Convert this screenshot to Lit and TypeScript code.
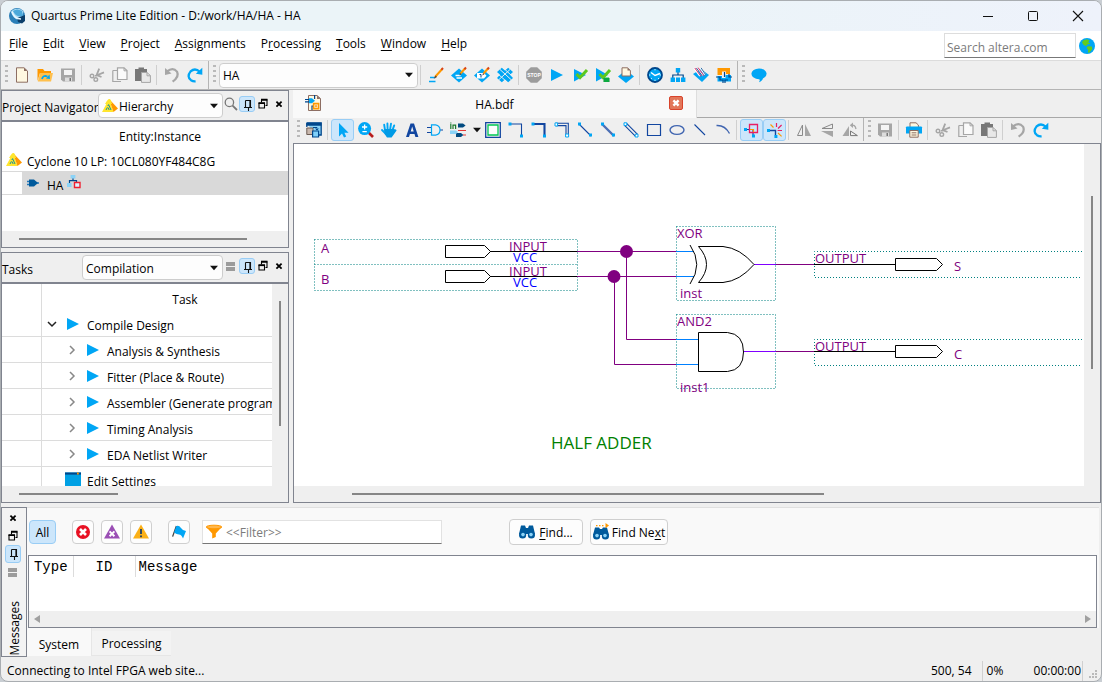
import { LitElement, html, css, svg, nothing } from "lit";
import type { TemplateResult } from "lit";
import { customElement } from "lit/decorators.js";
import { classMap } from "lit/directives/class-map.js";

const BLUE = "#00a6f5";
const NAVY = "#00468b";
const INK = "#1246a0";
const GREY = "#a6a6a6";
const ORANGE = "#ff9800";
const BROWN = "#8d6e63";

const diamond = svg`<path d="M8 1.5 16 8.5 8 15.5 0 8.5z" fill=${BLUE}/>`;
const pencil = svg`<path d="M9.5 6.5 14 1.5" stroke=${ORANGE} stroke-width="2"/><path d="M13.4 2.2 15 .5" stroke="#d84315" stroke-width="2"/><path d="M8.4 8.4 9 6 10.4 7.2z" fill="#5d4037"/>`;
const check = svg`<path d="M4.5 7 8 10.5 15 3" fill="none" stroke="#5cc81e" stroke-width="3"/>`;

const icons: Record<string, TemplateResult> = {
  app: svg`<circle cx="8" cy="8" r="8" fill="#2b7fb8"/><path d="M2 4A7.6 7.6 0 0 1 14.5 4L13 9 9 12Q3 9 2 4z" fill="#a9dcf5"/><path d="M4 3Q7 10 14 8L13 3Q8 0 4 3z" fill="#4aa8da"/><path d="M8 10 16 7V13L13 15.5 9 14z" fill="#0b3f6b"/><path d="M3 3.5Q5 11 12 11" fill="none" stroke="#e6f6ff" stroke-width="1.4"/>`,
  new: svg`<path d="M2.5.8H10L13.5 4V15.2H2.5z" fill="#fff8e1" stroke=${BROWN}/><path d="M10 .8V4H13.5z" fill=${BROWN}/>`,
  open: svg`<path d="M.5 14V2H6L7.5 4H14V6H3z" fill=${ORANGE}/><path d="M3 6H16L14 14.5H.8z" fill="#ffc04d"/><path d="M5 12Q6 7.8 10.5 9.5" fill="none" stroke=${BLUE} stroke-width="1.8"/><path d="M9 11.5 13 12 12.5 7.5z" fill=${BLUE}/>`,
  save: svg`<path d="M1 1.5H15V14.5H3L1 12.5z" fill=${GREY}/><path d="M4 3H12V8H4z" fill="#f4f4f4"/><path d="M5 10.5H12V14.5H5z" fill="#ddd"/><path d="M9.5 11H11V14H9.5z" fill="#777"/>`,
  cut: svg`<path d="M7.2 9.2 10.2 1.6M6 9 15 5.4M8.5 8.3 12.5 10" fill="none" stroke=${GREY} stroke-width="1.8"/><circle cx="3" cy="9" r="1.8" fill="none" stroke=${GREY} stroke-width="1.4"/><circle cx="6.8" cy="12.6" r="1.8" fill="none" stroke=${GREY} stroke-width="1.4"/>`,
  copy: svg`<path d="M.8 3.5H5.5M.8 3.5V14.5H9" fill="none" stroke=${GREY} stroke-width="1.2"/><path d="M5.5.8H12L15 3.5V12.5H5.5z" fill="#fafafa" stroke=${GREY} stroke-width="1.2"/><path d="M12 .8V3.8H15" fill="none" stroke=${GREY}/>`,
  paste: svg`<path d="M0 2H3.5V.5H9V2H12V14H0z" fill="#777"/><path d="M6.5 5.5H12L15.4 8.5V15.4H6.5z" fill="#e8e8e8" stroke=${GREY}/><path d="M12 5.5V8.8H15.4" fill="none" stroke=${GREY}/>`,
  undo: svg`<path d="M3 4.4Q9-.2 13 4.6Q15.6 10 8.6 14.6" fill="none" stroke=${GREY} stroke-width="2.2"/><path d="M1 1V8L7.5 6.5z" fill=${GREY}/>`,
  redo: svg`<path d="M13 5Q8.2.4 3.6 4.4Q-.6 9.6 4 13.2Q6 14.6 8.6 14.4" fill="none" stroke=${BLUE} stroke-width="2.3"/><path d="M15.3.8V7.8L8.8 6.8z" fill=${BLUE}/>`,
  write: svg`<path d="M2 10.5H7.5M1 14.5H7.5" stroke=${BLUE} stroke-width="1.4"/><path d="M7 10 14.2 2" stroke=${ORANGE} stroke-width="2"/><path d="M13.4 2.8 15 1" stroke="#d84315" stroke-width="2"/><path d="M5.6 11.8 7.6 8.6 9 10z" fill="#5d4037"/>`,
  assign: svg`${diamond}<path d="M4.5 8.5H9.5M5.5 11H11" stroke="#fff" stroke-width="1.3"/>${pencil}`,
  pins: svg`${diamond}<path d="M3 6H10L12.5 8.7 10 11.5H3z" fill="#fff"/><path d="M5.5 7.5H7V10.5" fill="none" stroke=${NAVY}/>${pencil}`,
  chips: svg`<path d="M4.8.8 8 3.4 11.2.8 16 5 13 7.8 16 11 11.2 15.2 8 12.6 4.8 15.2 0 11 3 7.8 0 5z" fill=${BLUE}/><path d="M3 2.5 14.5 13M1 7 10 15M7 1.5 15.5 9.5M13 2.5 1.5 13" stroke="#efefef" stroke-width="1"/>`,
  stop: svg`<path d="M4.8.3H11.2L15.8 4.8V11.2L11.2 15.7H4.8L.2 11.2V4.8z" fill="#9c9c9c"/><text x="8" y="10" text-anchor="middle" font-size="5" font-weight="700" fill="#fff" font-family="Liberation Sans, sans-serif">STOP</text>`,
  play: svg`<path d="M2 2V14L14 8z" fill=${BLUE}/>`,
  playcheck: svg`<path d="M2 2V14.5L14 8z" fill=${BLUE}/>${check}`,
  playchip: svg`<path d="M1 1V14.5L13 8z" fill=${BLUE}/>${check}<path d="M9 10.5H14V15H9z" fill="#12c94a"/><path d="M8 12H15M8 14H15" stroke="#078a35"/>`,
  docdiamond: svg`<path d="M8 3 16 9.5 8 16 0 9.5z" fill=${BLUE}/><path d="M4 .8H9.5L12.4 3.5V9H4z" fill="#fff8e1" stroke=${BROWN}/><path d="M9.5.8V3.5H12.4z" fill=${BROWN}/>`,
  clock: svg`<circle cx="8" cy="8" r="7" fill=${BLUE} stroke=${NAVY} stroke-width="1.8"/><path d="M4 5.5 8 8.5 13 6.5" fill="none" stroke="#fff" stroke-width="1.5"/><path d="M8 2V3.3M8 12.7V14M2 8H3.3M12.7 8H14M4 11.8 5 11M12 12 11 11" stroke="#cdefff"/>`,
  tree: svg`<path d="M8 5V8M2.8 11V8H13.2V11" fill="none" stroke=${NAVY} stroke-width="1.2"/><path d="M5.8 1H10.2V5.6H5.8z" fill=${BLUE}/><path d="M.6 10.4H5V15H.6zM6 10.4H10V15H6zM11 10.4H15.4V15H11z" fill=${BLUE}/>`,
  program: svg`<path d="M0 7 8 2 16 8 9 15z" fill=${BLUE}/><path d="M1 1 7 9M4 .6 10 8.6M7.2.6 12 7.6" stroke="#fff" stroke-width="1.8"/><path d="M1.8 1 8 9.4M5 .6 11 8.8" stroke="#d81b60" stroke-width=".9"/><path d="M3.4 1 9.4 9M8 .8 12.4 7.4" stroke=${NAVY} stroke-width=".8"/>`,
  convert: svg`<path d="M1.5 1H14V7H10V4.5H6V8H1.5z" fill=${ORANGE}/><path d="M1.5 9H6V11H9.5V8H15V14.5H1.500z" fill=${BLUE}/><path d="M0 10H4V13H7V16M8.500 5V10M13 7V10H16M9 16V13H12" fill="none" stroke=${NAVY} stroke-width="1.2"/>`,
  bubble: svg`<ellipse cx="8" cy="6.8" rx="7.6" ry="5.4" fill=${BLUE}/><path d="M6 11H12Q11.5 14 8 15.3 9.6 13 8 11.5z" fill=${BLUE}/>`,
  layout: svg`<path d="M.8.8H15.2V13H9M.8.8V5" fill="#8bd3f7" stroke=${NAVY} stroke-width="1.3"/><path d="M.5.8H15.5V3.8H.5z" fill=${NAVY}/><path d="M.8 6H7V12.5H.8z" fill="#c9b8ae" stroke="#6d5d55"/><path d="M6.6 9H12.6V15H6.6z" fill="#7fd0fa" stroke=${NAVY} stroke-width="1.2"/><path d="M7 5.5H11V8M9.6 6.6 11 8.2 12.5 6.6" fill="none" stroke=${NAVY}/>`,
  arrow: svg`<path d="M4 1V14.5L7 11.6 9 15.6 11.2 14.6 9.4 10.8H13.6z" fill=${BLUE}/>`,
  zoom: svg`<path d="M10.5 10.5 15 15" stroke="#b71c1c" stroke-width="2.6"/><circle cx="6.6" cy="6.6" r="6.5" fill=${BLUE}/><path d="M4 5H9.2M6.6 2.6V7.4M4.4 9.6H8.8" stroke="#fff" stroke-width="1.3"/>`,
  hand: svg`<path d="M4 8 3.2 2.8M6.6 7 6.4 1.4M9.2 7 10 1.6M11.4 8.4 13.2 3.4M5 12 1 8" stroke=${BLUE} stroke-width="1.9" stroke-linecap="round"/><path d="M3.2 7H12.4L15 7.4 15.6 8.6 12.4 13 10.6 15.6H6L3.6 12z" fill="#009be6"/>`,
  text: svg`<path d="M2 15 6.5 1.5H10L14.4 15H11.4L10.5 12H5.9L5 15zM6.7 9.5H9.7L8.2 4.6z" fill=${INK} fill-rule="evenodd"/>`,
  gate: svg`<path d="M0 5.5H4M0 10.5H4M13 8H16" stroke=${INK} stroke-width="1.1"/><path d="M4.5 2.8H8.6Q13 3.6 13 8T8.6 13.2H4.5z" fill="none" stroke=${BLUE} stroke-width="1.2"/>`,
  pintool: svg`<path d="M.8 2V7M3 7V3.2H5.6V7M.3 1H1.4" fill="none" stroke="#1b7a2c" stroke-width="1.2"/><path d="M8 1.5H13L15.6 3.4 13 5.4H8zM6 11H11L13.4 13 11 15H6z" fill="#004a80"/><path d="M0 8.5H6L8 10 6 12H0z" fill="#8bd3f7"/><path d="M8 8.5H16M13 13H16" stroke="#e53935" stroke-width="1.2"/>`,
  block: svg`<path d="M.7.7H15.3V15.3H.7z" fill="none" stroke=${INK} stroke-width="1.3"/><path d="M3 3H13V13H3z" fill="#fdfdfd" stroke="#00c853" stroke-width="1.3"/>`,
  wire: svg`<path d="M2 2H13.5V13" fill="none" stroke=${INK} stroke-width="1.1"/><path d="M.5.5H3.5V3.5H.5zM12 12.4H15V15.4H12z" fill=${BLUE}/>`,
  bus: svg`<path d="M2 2H13.5V13" fill="none" stroke=${INK} stroke-width="2.1"/><path d="M.5.5H3.5V3.5H.5zM12 12.4H15V15.4H12z" fill=${BLUE}/>`,
  conduit: svg`<path d="M2 1.3H14.3V13M2 3.6H12V13" fill="none" stroke=${INK} stroke-width="1.1"/><path d="M1 .9H3.6V4H1zM11.6 12H14.6V15H11.6z" fill="#fff" stroke=${BLUE}/>`,
  dwire: svg`<path d="M2 2 14 14" stroke=${INK} stroke-width="1.1"/><path d="M1 .5H4V3.5H1zM12 11.6H15V14.6H12z" fill=${BLUE}/>`,
  dbus: svg`<path d="M2 2 14 14" stroke="#4c6fb5" stroke-width="2.4"/><path d="M1 .5H4V3.5H1zM12 11.6H15V14.6H12z" fill=${BLUE}/>`,
  dconduit: svg`<path d="M3.6 1.4 14.8 12.6M1.6 3.4 12.8 14.6" stroke=${INK} stroke-width="1.1"/><path d="M1 .8H3.8V3.6H1zM12.2 12.2H15V15H12.2z" fill="#fff" stroke=${BLUE}/>`,
  rect: svg`<path d="M1.5 2.5H14.5V13.5H1.5z" fill="none" stroke=${INK} stroke-width="1.2"/>`,
  oval: svg`<ellipse cx="8" cy="8" rx="7" ry="4.4" fill="none" stroke="#4065b0" stroke-width="1.4"/>`,
  line: svg`<path d="M2.5 2.5 13 13" stroke=${INK} stroke-width="1.1"/>`,
  arc: svg`<path d="M1.5 3.5Q10 3 14.5 11.5" fill="none" stroke="#4065b0" stroke-width="1.4"/>`,
  rubber: svg`<path d="M2 7.5H9V13.5" fill="none" stroke=${INK} stroke-width="1.2"/><path d="M5.5 2.5H13.5V10.5H5.5z" fill="none" stroke="#e91e63" stroke-width="1.3"/><path d="M6 7.5H9.5V10" fill="none" stroke=${ORANGE} stroke-width="1.2"/><path d="M0 6H3V9H0zM8 12.5H11V15.5H8z" fill=${BLUE}/>`,
  partial: svg`<path d="M2 8.5H8.5V13.5" fill="none" stroke=${INK} stroke-width="1.4"/><path d="M9.5 1V5M10.6 8.5H15M11 6.5 14.6 3" stroke="#e91e63" stroke-width="1.2"/><path d="M3.5 2.5 6.5 5.5M11 11 14.6 14.4" stroke=${ORANGE} stroke-width="1.2"/><path d="M0 7H3V10H0zM7.4 13H10.4V16H7.4z" fill=${BLUE}/>`,
  fliph: svg`<path d="M6.5 3V13.5H1.5z" fill="none" stroke="#8a8a8a"/><path d="M9 2V14H15z" fill=${GREY}/>`,
  flipv: svg`<path d="M13.5 2V6.5H3z" fill="none" stroke="#8a8a8a"/><path d="M2 9H14V15z" fill=${GREY}/>`,
  rotate: svg`<path d="M7 4V14H.5z" fill=${GREY}/><path d="M8.5 9V13.6H15.4z" fill="none" stroke="#777"/><path d="M9 3.5Q13 2 14 7" fill="none" stroke=${GREY} stroke-width="1.3"/><path d="M11 .5V6L7.8 3.2z" fill=${GREY}/>`,
  print: svg`<path d="M4 5V.8H10L12.4 3V5" fill="#fff8e1" stroke=${BROWN}/><path d="M0 5.2Q0 4.4 1 4.4H15Q16 4.4 16 5.2V11.5H0z" fill=${BLUE}/><path d="M3.8 8.5H12.2V15.2H3.8z" fill="#fff8e1" stroke=${BROWN}/><path d="M5.6 10.8H10.4M5.6 13H10.4" stroke=${BROWN}/>`,
  docgate: svg`<path d="M3.5.5H12L15.5 3.5V15.5H3.5z" fill="#fff8e1" stroke=${BROWN}/><path d="M12 .5V4H15.5z" fill=${BROWN}/><path d="M0 4.5H5M0 6.8H5M7 15V11H9M9.6 0V4" fill="none" stroke=${NAVY} stroke-width="1.2"/><path d="M4 3.2H7L10 5.7 7 8.2H4z" fill=${BLUE}/><path d="M8.6 8.6H13.6V13.6H8.6z" fill="#fff" stroke=${ORANGE} stroke-width="1.6"/><path d="M11 9.8V12.4M9.8 11.1H12.4" stroke=${ORANGE}/>`,
  pyramid: svg`<path d="M7 1 0 14H11.5z" fill="#ffe52e"/><path d="M7 1 11.5 14 16 10.4z" fill=${ORANGE}/><path d="M4.5 3.5Q7-1 9 2.4L10 6H3z" fill="#ffe52e"/><path d="M4 12 5.4 9.4M6 9.6 7.2 12M5.8 8 6.6 6.6 9 12" fill="none" stroke="#0089a8" stroke-width=".9"/>`,
  chip: svg`<path d="M0 5.5H3M0 8.5H3M9 7H12" stroke="#2176b8" stroke-width="1.3"/><path d="M2 3.5H7L11 7 7 10.5H2z" fill="#005a9c"/>`,
  hier: svg`<path d="M6 3V6M2.5 8V5.6H9.5V8" fill="none" stroke=${NAVY} stroke-width="1.2"/><path d="M3.6 0H8.4V3.6H3.6zM0 8H4.6V12H0z" fill="#8bd3f7"/><path d="M7.5 7.5H13V12.5H7.5z" fill="#dff3ff" stroke="#f02030" stroke-width="1.4"/>`,
  settings: svg`<path d="M0 .5H16V16H0z" fill="#00a0e4"/><path d="M0 .5H16V2.6H0z" fill=${NAVY}/><path d="M12 .6H13.8V2.4H12z" fill=${ORANGE}/>`,
  down: svg`<path d="M4 5.8H12L8 10.2z" fill="#111"/>`,
  chevdown: svg`<path d="M4 6 8 10 12 6" fill="none" stroke="#222" stroke-width="1.5"/>`,
  chevright: svg`<path d="M6 4 10 8 6 12" fill="none" stroke="#888" stroke-width="1.5"/>`,
  search: svg`<circle cx="6.4" cy="6.4" r="4.2" fill="none" stroke="#777" stroke-width="1.3"/><path d="M9.6 9.6 14 14" stroke="#777" stroke-width="1.8"/>`,
  menu: svg`<path d="M3 4.5H12M3 6.500H12M3 9.500H12M3 11.500H12" transform="translate(0 .5)" stroke="#808080" stroke-width="1.3"/>`,
  pin: svg`<path d="M5.5 3.5H10.5V10.5M5.5 3.5V10.5M4 10.5H12M8.5 10.5V14" fill="none" stroke="#111" stroke-width="1.1"/><path d="M9.4 3V10.5H11V3z" fill="#111"/>`,
  float: svg`<path d="M6.5 4H12V9.5H10.5M6.5 4V6.5" fill="none" stroke="#000" stroke-width="1.1"/><path d="M6 3.6H12.5" stroke="#000" stroke-width="1.8"/><path d="M4 7.4H9.5V12H4z" fill="none" stroke="#000" stroke-width="1.1"/><path d="M3.5 7.2H10" stroke="#000" stroke-width="1.8"/>`,
  close: svg`<path d="M5.4 5.6 10.6 10.6M10.6 5.6 5.4 10.6" stroke="#000" stroke-width="1.8"/>`,
  tabclose: svg`<rect x="1.5" y="1.5" width="13" height="13" rx="1.5" fill="#e2775a" stroke="#d8432b"/><path d="M5.4 5.4 10.6 10.6M10.6 5.4 5.4 10.6" stroke="#fff" stroke-width="2.4"/>`,
  min: svg`<path d="M3 8.5H13" stroke="#111"/>`,
  max: svg`<rect x="3.5" y="3.5" width="9" height="9" rx="1" fill="none" stroke="#111"/>`,
  exit: svg`<path d="M3 3 13 13M13 3 3 13" stroke="#111" stroke-width="1.1"/>`,
  globe: svg`<circle cx="8" cy="8" r="8" fill=${BLUE}/><path d="M4 2.4 8 1.2 10.4 2.4 9.2 4.4 11.6 5.4 8.4 6.6 7 8 4.6 7 3 4.6zM8.6 8.2 12.8 8.6 13.4 11 10.6 14.6 8.8 14.8 9.2 12 7.6 10z" fill="#64cc1e"/>`,
  error: svg`<circle cx="8" cy="8" r="7" fill="#e81123"/><path d="M5 5 11 11M11 5 5 11" stroke="#fff" stroke-width="2.6"/>`,
  critical: svg`<path d="M8 .6 16 14.6H0z" fill="#9b4fb5"/><path d="M5.6 7.4 10.4 12.2M10.4 7.4 5.6 12.2" stroke="#fff" stroke-width="2"/>`,
  warning: svg`<path d="M8 .6 16 14.6H0z" fill="#fbb017"/><path d="M8 5V10M8 11.4V13.2" stroke="#1c3f66" stroke-width="1.8"/>`,
  flag: svg`<path d="M5.4 2 1.6 12.6" stroke="#444" stroke-width="1.3"/><path d="M5.4 2Q8 1 10 4T15 7L12 14.4Q10.4 10.4 8 10.4T3 8.4z" fill=${BLUE}/>`,
  funnel: svg`<path d="M.2 3 6.2 9.4V14.4L9.8 13V9.4L15.8 3z" fill=${ORANGE}/><ellipse cx="8" cy="3" rx="7.8" ry="1.8" fill="#ffb74d" stroke=${ORANGE}/>`,
  find: svg`<path d="M2 1.5H6L7 4H9L10 1.5H14L16 10H0z" fill="#005a9c"/><circle cx="3.6" cy="11" r="3.6" fill="#005a9c"/><circle cx="12.4" cy="11" r="3.6" fill="#005a9c"/><circle cx="4" cy="10.6" r="1.8" fill="#8bd3f7"/><circle cx="12" cy="10.6" r="1.8" fill="#8bd3f7"/>`,
  findnext: svg`<path d="M2 3.5H6L7 5H9L10 3.5H14L16 11H0z" fill="#005a9c"/><circle cx="3.6" cy="12" r="3.6" fill="#005a9c"/><circle cx="12.4" cy="12" r="3.6" fill="#005a9c"/><circle cx="4" cy="11.6" r="1.8" fill="#8bd3f7"/><circle cx="12" cy="11.6" r="1.8" fill="#8bd3f7"/><path d="M3 1.6H11" stroke=${ORANGE} stroke-width="1.2" stroke-dasharray="1.5 1.5"/><path d="M12.5-1 16 1.6 12.5 4.2z" fill=${ORANGE}/>`,
};

const icon = (name: string) =>
  html`<svg class="icon" viewBox="0 0 16 16" aria-hidden="true">${icons[name]}</svg>`;

const menus: [string, string, string][] = [
  ["", "F", "ile"], ["", "E", "dit"], ["", "V", "iew"], ["", "P", "roject"],
  ["", "A", "ssignments"], ["P", "r", "ocessing"], ["", "T", "ools"],
  ["", "W", "indow"], ["", "H", "elp"],
];

const tasks = [
  "Analysis & Synthesis",
  "Fitter (Place & Route)",
  "Assembler (Generate programming files)",
  "Timing Analysis",
  "EDA Netlist Writer",
];

const SEP = "|";
const fileTools = ["new", "open", "save", SEP, "cut", "copy", "paste", SEP, "undo", "redo"];
const flowTools = [SEP, "write", "assign", "pins", "chips", SEP, "stop", "play", "playcheck", "playchip",
  "docdiamond", SEP, "clock", "tree", "program", "convert"];
const drawTools = ["layout", SEP, "arrow", "zoom", "hand", "text", "gate", "pintool", "down", "block",
  "wire", "bus", "conduit", "dwire", "dbus", "dconduit", "rect", "oval", "line", "arc", SEP,
  "rubber", "partial", SEP, "fliph", "flipv", "rotate"];
const editTools = ["save", SEP, "print", SEP, "cut", "copy", "paste", SEP, "undo", "redo"];
const pressed = new Set(["arrow", "rubber", "partial"]);

const toolbar = (items: string[]) => items.map((name) =>
  name === SEP
    ? html`<span class="sep"></span>`
    : html`<button class=${classMap({ tool: true, on: pressed.has(name), narrow: name === "down" })}
        aria-label=${name}>${icon(name)}</button>`);

const pinShape = (x: number, y: number, body: number) =>
  svg`<path d="M${x} ${y - 6}H${x + body}L${x + body + 6} ${y}L${x + body} ${y + 6}H${x}z"/>`;

const schematic = svg`
  <g class="frame">
    <path d="M20.5 95.5H283.5V146.5H20.5zM20.5 120.5H283.5"/>
    <path d="M382.5 82.5H481.5V156.5H382.5zM382.5 170.5H481.5V244.5H382.5z"/>
    <path d="M788 107.5H520.5V133.5H788M788 195.5H520.5V221.5H788"/>
  </g>
  <g class="label">
    <text x="27" y="109">A</text><text x="27" y="140">B</text>
    <text x="215" y="107">INPUT</text><text x="215" y="132">INPUT</text>
    <text x="383" y="94">XOR</text><text x="386" y="154">inst</text>
    <text x="383" y="182">AND2</text><text x="386" y="248">inst1</text>
    <text x="521" y="119">OUTPUT</text><text x="521" y="207">OUTPUT</text>
    <text x="660" y="127">S</text><text x="660" y="215">C</text>
  </g>
  <g class="level"><text x="219" y="118">VCC</text><text x="219" y="143">VCC</text></g>
  <text class="note" x="257" y="305">HALF ADDER</text>
  <g class="net">
    <path d="M283 107.5H382M283 132.5H382M332.5 107V195.5H382M320.5 132V220.5H382M481 120.5H520M481 207.5H520"/>
  </g>
  <g class="stub"><path d="M382 107.5H400M382 132.5H400M382 195.5H404M382 220.5H404"/></g>
  <g class="drive"><path d="M460 120.5H482M450 207.5H482"/></g>
  <g class="body">
    <path d="M196 107.5H283M196 132.5H283M520 120.5H601M520 207.5H601"/>
    ${pinShape(151.5, 107.5, 39)}${pinShape(151.5, 132.5, 39)}
    ${pinShape(601.5, 120.5, 41)}${pinShape(601.5, 207.5, 41)}
    <path d="M404.5 102.5H429Q446 104 460 120.5Q446 137 429 138.5H404.5Q420.5 120.5 404.5 102.5z"/>
    <path d="M396 101Q409.5 120.5 396 140"/>
    <path d="M404.5 188.5H433.5Q449.5 190 449.5 208T433.5 227.5H404.5z"/>
  </g>
  <circle class="node" cx="332.5" cy="107.5" r="6.5"/>
  <circle class="node" cx="320" cy="132.5" r="6.5"/>`;

@customElement("app-root")
export class AppRoot extends LitElement {
  static styles = css`
    :host { display: block; height: 100vh; font: 12px/16px "Open Sans", "Noto Sans", sans-serif; color: #000; background: #c9ced3; }
    * { box-sizing: border-box; }
    button, select, input { font: inherit; color: inherit; margin: 0; padding: 0; }
    button { background: none; border: 0; }
    u { text-underline-offset: 2px; }
    .icon { width: 16px; height: 16px; display: block; flex: none; overflow: visible; }

    .window { height: 100%; display: flex; flex-direction: column; background: #efefef; border: 1px solid #a9adb1; border-radius: 8px; overflow: hidden; }
    .title { display: flex; align-items: center; gap: 6px; height: 30px; flex: none; padding: 0 15px 0 8px; background: linear-gradient(90deg, #ebf4f8 60%, #eef2fb); }
    .title h1 { font: inherit; margin: 0; flex: 1; }
    .caption { display: flex; gap: 29px; }

    .menubar { display: flex; align-items: center; height: 30px; flex: none; background: #fff; border-bottom: 1px solid #dcdcdc; padding: 0 6px 0 8px; }
    .menus { display: flex; gap: 15px; flex: 1; padding-bottom: 3px; }
    .site { display: flex; align-items: center; gap: 3px; }
    .site input { width: 132px; height: 25px; border: 1px solid #ddd; border-bottom-color: #777; padding: 3px 2px 0; }
    input::placeholder { color: #7b7b7b; opacity: 1; }

    .tools { display: flex; align-items: center; height: 29px; flex: none; border-bottom: 1px solid #b4b4b4; }
    .group { display: flex; align-items: center; height: 100%; padding: 0 2px 0 4px; }
    .group + .group { border-left: 1px solid #b4b4b4; }
    .grip { width: 3px; height: 20px; margin-right: 2px; background: repeating-linear-gradient(#b9b9b9 0 2px, transparent 2px 5px); flex: none; }
    .tool { width: 23px; height: 22px; display: grid; place-items: center; flex: none; }
    .narrow { width: 12px; }
    .on { background: #cce6fb; border: 1px solid #99cdf5; border-radius: 3px; }
    .sep { width: 1px; height: 20px; margin: 0 3px 0 2px; background: #cfcfcf; flex: none; }

    .combo { display: grid; align-items: center; height: 25px; background: #fdfdfd; border: 1px solid #cdcdcd; border-radius: 4px; flex: none; }
    .combo > * { grid-area: 1 / 1; }
    .combo select { appearance: none; background: none; border: 0; width: 100%; height: 100%; padding: 2px 16px 0 3px; outline: 0; }
    .combo .icon { justify-self: end; pointer-events: none; }
    .combo .lead { justify-self: start; padding-left: 3px; }
    .project { width: 199px; margin-left: 1px; }
    .source { width: 125px; }
    .source select { padding-left: 20px; }
    .flow { width: 141px; }

    .main { flex: 1; min-height: 0; display: grid; grid-template-columns: 288px 1fr; gap: 4px; }
    .side { display: flex; flex-direction: column; gap: 4px; min-height: 0; }
    .panel { background: #fff; border: 1px solid #80848f; display: flex; flex-direction: column; min-height: 0; }
    .navigator { height: 158px; flex: none; }
    .tasks { flex: 1; }
    .head { display: flex; align-items: center; height: 31px; flex: none; background: #efefef; border-bottom: 2px solid #80848f; }
    .head h2 { font: inherit; margin: 0; flex: 1; min-width: 0; white-space: nowrap; padding-top: 4px; }
    .mini { width: 16px; height: 16px; display: grid; place-items: center; }
    .headtools { display: flex; padding: 0 1px 3px 0; }
    .hbar { height: 16px; flex: none; background: #efefef; display: flex; align-items: center; padding-left: 17px; }
    .thumb { height: 2px; background: #868686; }
    .navthumb { width: 228px; }
    .taskthumb { width: 99px; }
    .entity { flex: 1; }
    .colhead { text-align: center; padding: 7px 0 0 30px; height: 29px; }
    .device { display: flex; gap: 5px; padding: 2px 0 0 4px; height: 20px; }
    .device .icon { margin-top: -1px; }
    .device span { padding-top: 1px; }
    .inst { display: flex; height: 24px; border: solid #d9d9d9; border-width: 1px 0; padding-left: 20px; }
    .instrow { flex: 1; background: #d9d9d9; display: flex; align-items: flex-start; gap: 4px; padding: 4px 0 0 5px; }
    .instrow span { padding-top: 2px; }
    .instrow .icon:last-child { margin-top: -1px; }

    .taskbody { flex: 1; display: flex; min-height: 0; overflow: hidden; }
    .tasklist { flex: 1; min-width: 0; overflow: hidden; margin: 0; padding: 0; list-style: none; background: linear-gradient(90deg, transparent 39px, #dcdcdc 39px 40px, transparent 40px); }
    .tasklist li { display: flex; gap: 5px; align-items: center; height: 26px; border-bottom: 1px solid #dcdcdc; padding-left: 42px; white-space: nowrap; }
    .tasklist li span { padding: 4px 0 0 1px; }
    .tasklist .sub { padding-left: 62px; }
    .tasklist .taskhead { justify-content: center; border: 0; padding: 4px 0 0 96px; height: 27px; }
    .tasklist .taskhead span { padding: 0; }
    .tasklist .edit { padding-left: 63px; border: 0; }
    .vbar { width: 16px; flex: none; background: #efefef; display: flex; justify-content: center; padding-top: 17px; }
    .vthumb { width: 2px; height: 125px; background: #868686; }

    .editor { display: flex; flex-direction: column; min-width: 0; min-height: 0; }
    .tabrow { display: flex; height: 28px; flex: none; border-bottom: 1px solid #a8a8a8; }
    .doc { flex: 0 0 404px; display: flex; align-items: center; background: #f9f9f9; padding: 0 12px 2px; margin-bottom: -1px; border-right: 1px solid #ddd; }
    .doc span { flex: 1; text-align: center; padding-top: 3px; }
    .draw { height: 25px; border: 0; padding-bottom: 2px; }
    .sheet { flex: 1; min-height: 0; display: grid; grid-template: 1fr 16px / 1fr 16px; border: 1px solid #80848f; background: #efefef; }
    .canvas { background: #fff; overflow: hidden; min-width: 0; min-height: 0; }
    .canvas svg { display: block; width: 100%; height: 100%; }
    .sheet .vbar { padding-top: 52px; }
    .sheet .vthumb { height: 173px; }
    .sheet .hbar { padding-left: 58px; }
    .sheetthumb { width: 472px; }
    .frame { fill: none; stroke: #008080; stroke-dasharray: 1 2; }
    .label, .level { font: 13px "Open Sans", sans-serif; fill: #800080; }
    .level { fill: #0000ff; }
    .note { font: 17px "Open Sans", sans-serif; fill: #008000; }
    .net, .stub, .drive, .body { fill: none; stroke: #800080; }
    .stub { stroke: #0080ff; }
    .drive { stroke: #8000ff; }
    .body { stroke: #000; }
    .node { fill: #800080; }

    .messages { display: flex; height: 150px; flex: none; margin-top: 4px; }
    .strip { width: 26px; flex: none; border: 1px solid #80848f; display: flex; flex-direction: column; align-items: center; padding: 1px 2px 0 0; background: #f3f3f3; }
    .strip .mini { height: 18px; }
    .vertical { margin: auto -3px 0 0; writing-mode: vertical-rl; transform: rotate(180deg); }
    .log { flex: 1; min-width: 0; display: flex; flex-direction: column; }
    .logtop { background: #f9f9f9; border-top: 1px solid #e0e0e0; padding: 0 2px 0 1px; flex: none; margin-right: 2px; }
    .filters { display: flex; align-items: center; height: 47px; padding: 0 0 0 1px; }
    .chipbtn { width: 22px; height: 24px; display: grid; place-items: center; border: 1px solid #cfcfcf; border-radius: 4px; background: #fdfdfd; margin-right: 7px; }
    .all { width: 27px; background: #cce6fb; border-color: #99cdf5; padding-top: 3px; margin-right: 16px; }
    .warn { margin-right: 16px; }
    .mark { margin-right: 12px; }
    .filter { display: flex; align-items: center; gap: 4px; width: 240px; height: 24px; padding-left: 3px; background: #fff; border: 1px solid #e2e2e2; border-bottom-color: #777; margin-right: 67px; }
    .filter input { border: 0; background: none; flex: 1; min-width: 0; padding-top: 3px; }
    .push { display: flex; align-items: center; justify-content: center; gap: 4px; height: 26px; width: 74px; border: 1px solid #cfcfcf; border-radius: 4px; background: #fdfdfd; margin-right: 7px; white-space: nowrap; }
    .push span { padding-top: 3px; }
    .wide { width: 78px; gap: 3px; }
    .logbox { border: 1px solid #80848f; background: #fff; height: 73px; display: flex; flex-direction: column; justify-content: space-between; }
    table { border-collapse: collapse; width: 100%; font: 14px/16px "Liberation Mono", monospace; table-layout: fixed; }
    th { font-weight: 400; height: 21px; padding: 0; text-align: center; border-right: 1px solid #dcdcdc; }
    th:last-child { text-align: left; padding-left: 3px; border: 0; }
    .ctype { width: 44px; } .cid { width: 62px; }
    .scroll { height: 16px; background: #efefef; display: flex; justify-content: space-between; padding: 0 1px; }
    .tabs { display: flex; align-items: flex-start; }
    .tab { width: 79px; height: 25px; background: #f3f3f3; border: 1px solid #e6e6e6; border-width: 0 0 1px; padding-top: 2px; margin-top: 3px; }
    .current { width: 65px; height: 28px; margin: 0; padding-top: 5px; background: #f9f9f9; border-width: 0 1px 0 0; }

    .status { display: flex; align-items: center; height: 24px; flex: none; padding: 3px 3px 0 6px; }
    .status p { margin: 0; flex: 1; }
    .cell { border-left: 1px solid #d0d0d0; height: 20px; padding: 2px 0 0 4px; }
    .pos { border: 0; padding-right: 10px; }
    .zoomed { width: 52px; }
    .time { border-left: 0; border-right: 1px solid #d0d0d0; padding: 2px 1px 0 0; }
    .sizer { fill: #b9b9b9; width: 10px; height: 10px; margin: 8px 0 0 5px; }
  `;

  private panelButtons(first: string) {
    return html`<div class="headtools">
      ${[first, "pin", "float", "close"].map((n) => html`
        <button class=${classMap({ mini: true, on: n === "pin" })} aria-label=${n}>${icon(n)}</button>`)}
    </div>`;
  }

  private combo(cls: string, label: string, value: string, lead?: string) {
    return html`<div class="combo ${cls}">
      ${lead ? html`<span class="lead">${icon(lead)}</span>` : nothing}
      <select aria-label=${label}><option>${value}</option></select>
      ${icon("down")}
    </div>`;
  }

  render() {
    return html`<div class="window">
      <header class="title">
        ${icon("app")}
        <h1>Quartus Prime Lite Edition - D:/work/HA/HA - HA</h1>
        <div class="caption">
          ${["min", "max", "exit"].map((n) => html`<button aria-label=${n}>${icon(n)}</button>`)}
        </div>
      </header>

      <nav class="menubar">
        <div class="menus">
          ${menus.map(([a, k, b]) => html`<button>${a}<u>${k}</u>${b}</button>`)}
        </div>
        <div class="site">
          <input aria-label="Search altera.com" placeholder="Search altera.com">
          <button aria-label="Go">${icon("globe")}</button>
        </div>
      </nav>

      <div class="tools">
        <div class="group"><i class="grip"></i>${toolbar(fileTools)}</div>
        <div class="group"><i class="grip"></i>${this.combo("project", "Project", "HA")}${toolbar(flowTools)}</div>
        <div class="group"><i class="grip"></i>${toolbar(["bubble"])}</div>
      </div>

      <main class="main">
        <div class="side">
          <section class="panel navigator">
            <div class="head"><h2>Project Navigator</h2>
              ${this.combo("source", "View", "Hierarchy", "pyramid")}${this.panelButtons("search")}</div>
            <div class="entity">
              <div class="colhead">Entity:Instance</div>
              <div class="device">${icon("pyramid")}<span>Cyclone 10 LP: 10CL080YF484C8G</span></div>
              <div class="inst"><div class="instrow">${icon("chip")}<span>HA</span>${icon("hier")}</div></div>
            </div>
            <div class="hbar"><div class="thumb navthumb"></div></div>
          </section>

          <section class="panel tasks">
            <div class="head"><h2>Tasks</h2>
              ${this.combo("flow", "Flow", "Compilation")}${this.panelButtons("menu")}</div>
            <div class="taskbody">
              <ul class="tasklist">
                <li class="taskhead"><span>Task</span></li>
                <li>${icon("chevdown")}${icon("play")}<span>Compile Design</span></li>
                ${tasks.map((t) => html`<li class="sub">${icon("chevright")}${icon("play")}<span>${t}</span></li>`)}
                <li class="edit">${icon("settings")}<span>Edit Settings</span></li>
              </ul>
              <div class="vbar"><div class="vthumb"></div></div>
            </div>
            <div class="hbar"><div class="thumb taskthumb"></div></div>
          </section>
        </div>

        <section class="editor">
          <div class="tabrow">
            <div class="doc">${icon("docgate")}<span>HA.bdf</span>
              <button aria-label="Close tab">${icon("tabclose")}</button></div>
          </div>
          <div class="tools draw">
            <div class="group"><i class="grip"></i>${toolbar(drawTools)}</div>
            <div class="group"><i class="grip"></i>${toolbar(editTools)}</div>
          </div>
          <div class="sheet">
            <div class="canvas"><svg role="img" aria-label="Half adder schematic">${schematic}</svg></div>
            <div class="vbar"><div class="vthumb"></div></div>
            <div class="hbar"><div class="thumb sheetthumb"></div></div>
          </div>
        </section>
      </main>

      <section class="messages">
        <div class="strip">
          ${["close", "float", "pin", "menu"].map((n) => html`
            <button class=${classMap({ mini: true, on: n === "pin" })} aria-label=${n}>${icon(n)}</button>`)}
          <span class="vertical">Messages</span>
        </div>
        <div class="log">
          <div class="logtop">
            <div class="filters">
              <button class="chipbtn all">All</button>
              <button class="chipbtn" aria-label="Errors">${icon("error")}</button>
              <button class="chipbtn" aria-label="Critical warnings">${icon("critical")}</button>
              <button class="chipbtn warn" aria-label="Warnings">${icon("warning")}</button>
              <button class="chipbtn mark" aria-label="Flagged">${icon("flag")}</button>
              <label class="filter">${icon("funnel")}<input aria-label="Filter" placeholder="<<Filter>>"></label>
              <button class="push">${icon("find")}<span><u>F</u>ind...</span></button>
              <button class="push wide">${icon("findnext")}<span>Find Ne<u>x</u>t</span></button>
            </div>
            <div class="logbox">
              <table>
                <colgroup><col class="ctype"><col class="cid"><col></colgroup>
                <thead><tr><th>Type</th><th>ID</th><th>Message</th></tr></thead>
              </table>
              <div class="scroll">
                <svg class="icon" viewBox="0 0 16 16"><path d="M10 4V12L4 8z" fill="#a0a0a0"/></svg>
                <svg class="icon" viewBox="0 0 16 16"><path d="M6 4V12L12 8z" fill="#a0a0a0"/></svg>
              </div>
            </div>
          </div>
          <div class="tabs">
            <button class="tab current">System</button>
            <button class="tab">Processing</button>
          </div>
        </div>
      </section>

      <footer class="status">
        <p>Connecting to Intel FPGA web site...</p>
        <span class="cell pos">500, 54</span>
        <span class="cell zoomed">0%</span>
        <span class="cell time">00:00:00</span>
        <svg class="sizer" viewBox="0 0 10 10"><path d="M7 0H9V2H7zM4 3H6V5H4zM7 3H9V5H7zM1 6H3V8H1zM4 6H6V8H4zM7 6H9V8H7z"/></svg>
      </footer>
    </div>`;
  }
}
